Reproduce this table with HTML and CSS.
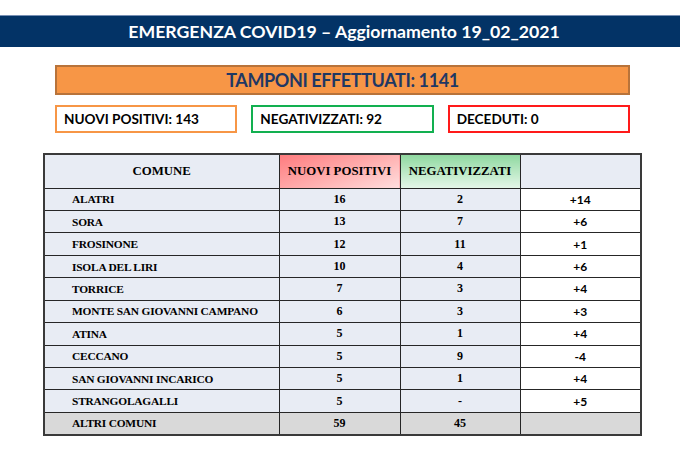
FILE: index.html
```html
<!DOCTYPE html>
<html lang="it">
<head>
<meta charset="utf-8">
<title>Emergenza COVID19</title>
<link rel="stylesheet" href="styles.css">
</head>
<body>
<header class="banner">EMERGENZA COVID19 – Aggiornamento 19_02_2021</header>
<section class="summary">
  <div class="tamponi">TAMPONI EFFETTUATI: 1141</div>
  <div class="stats">
    <div class="stat stat-pos">NUOVI POSITIVI: 143</div>
    <div class="stat stat-neg">NEGATIVIZZATI: 92</div>
    <div class="stat stat-dec">DECEDUTI: 0</div>
  </div>
</section>
<table class="grid">
  <colgroup>
    <col class="c1"><col class="c2"><col class="c3"><col class="c4">
  </colgroup>
  <thead>
    <tr>
      <th class="h-comune">COMUNE</th>
      <th class="h-pos">NUOVI POSITIVI</th>
      <th class="h-neg">NEGATIVIZZATI</th>
      <th class="h-blank"></th>
    </tr>
  </thead>
  <tbody>
    <tr><td class="name">ALATRI</td><td>16</td><td>2</td><td class="delta">+14</td></tr>
    <tr><td class="name">SORA</td><td>13</td><td>7</td><td class="delta">+6</td></tr>
    <tr><td class="name">FROSINONE</td><td>12</td><td>11</td><td class="delta">+1</td></tr>
    <tr><td class="name">ISOLA DEL LIRI</td><td>10</td><td>4</td><td class="delta">+6</td></tr>
    <tr><td class="name">TORRICE</td><td>7</td><td>3</td><td class="delta">+4</td></tr>
    <tr><td class="name">MONTE SAN GIOVANNI CAMPANO</td><td>6</td><td>3</td><td class="delta">+3</td></tr>
    <tr><td class="name">ATINA</td><td>5</td><td>1</td><td class="delta">+4</td></tr>
    <tr><td class="name">CECCANO</td><td>5</td><td>9</td><td class="delta">-4</td></tr>
    <tr><td class="name">SAN GIOVANNI INCARICO</td><td>5</td><td>1</td><td class="delta">+4</td></tr>
    <tr><td class="name">STRANGOLAGALLI</td><td>5</td><td>-</td><td class="delta">+5</td></tr>
    <tr class="total"><td class="name">ALTRI COMUNI</td><td>59</td><td>45</td><td class="delta"></td></tr>
  </tbody>
</table>
</body>
</html>
```
FILE: styles.css
```css
* { box-sizing: border-box; }
html, body { margin: 0; padding: 0; background: #ffffff; }
body { font-family: "Lato", "Liberation Sans", sans-serif; }

.banner {
  margin-top: 15px;
  height: 32px;
  background: #033366;
  border-top: 1px solid #7890b4;
  color: #ffffff;
  font-weight: 700;
  font-size: 17.7px;
  line-height: 31px;
  text-align: center;
  padding-left: 8px;
}

.summary {
  width: 575px;
  margin: 18px 0 0 55px;
}

.tamponi {
  height: 30px;
  background: #f79646;
  border: 2px solid #b8733a;
  color: #1f3864;
  font-weight: 700;
  font-size: 18px;
  letter-spacing: -0.4px;
  line-height: 26px;
  text-align: center;
}

.stats {
  margin-top: 10px;
  display: grid;
  grid-template-columns: repeat(3, 1fr);
  gap: 14px;
}

.stat {
  height: 28px;
  border: 2px solid;
  padding-left: 7px;
  font-weight: 700;
  font-size: 13.6px;
  line-height: 24px;
  color: #000000;
}
.stat-pos { border-color: #f79646; }
.stat-neg { border-color: #12b050; }
.stat-dec { border-color: #ff1a1a; }

.grid {
  margin: 20px 0 0 43px;
  border-collapse: collapse;
  table-layout: fixed;
  width: 597px;
  border: 2px solid #3a3a3a;
  font-family: "Liberation Serif", "Times New Roman", serif;
  font-weight: 700;
  color: #000000;
}
.c1 { width: 235px; }
.c2 { width: 121px; }
.c3 { width: 120px; }
.c4 { width: 121px; }

.grid th, .grid td {
  border: 1.5px solid #262626;
  padding: 0;
  text-align: center;
}

.grid th {
  height: 34px;
  font-size: 12.8px;
}
.h-comune, .h-blank { background: #e8ecf4; }
.h-pos { background: linear-gradient(160deg, #ff7b7e 0%, #ffb0b0 55%, #ffdede 100%); }
.h-neg { background: linear-gradient(180deg, #8fd8a0 0%, #c2ebcb 60%, #e4f6e8 100%); }

.grid td {
  height: 22.45px;
  font-size: 12px;
  background: #e8ecf4;
}
.grid td.name {
  text-align: left;
  padding-left: 27px;
  font-size: 11.4px;
  letter-spacing: -0.2px;
}
.grid td.delta {
  background: #ffffff;
  font-family: "Lato", "Liberation Sans", sans-serif;
  font-size: 12px;
}
.grid tr.total td { background: #d9d9d9; }
```
